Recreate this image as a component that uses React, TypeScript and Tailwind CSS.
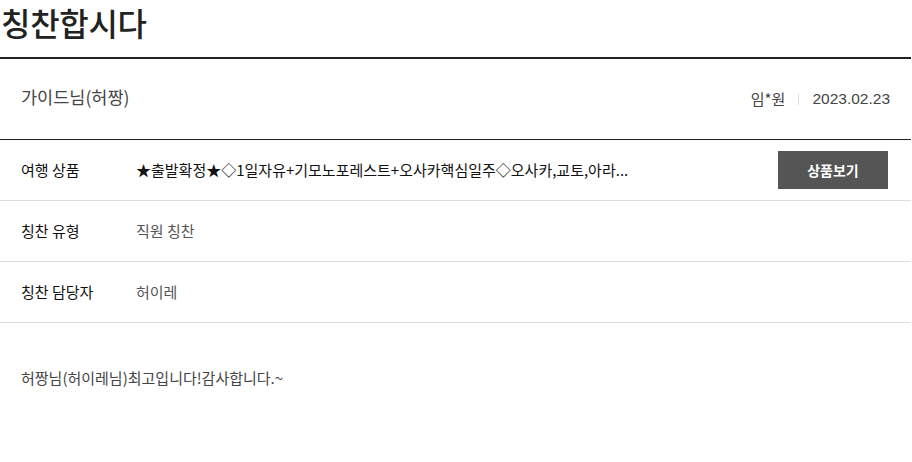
const rows = [
  { label: "여행 상품", value: "★출발확정★◇1일자유+기모노포레스트+오사카핵심일주◇오사카,교토,아라...", button: true, dark: true },
  { label: "칭찬 유형", value: "직원 칭찬" },
  { label: "칭찬 담당자", value: "허이레" },
];

export default function App() {
  return (
    <div className="w-[912px] bg-white text-[#333] font-['Noto_Sans_CJK_KR',sans-serif]">
      <h1 className="h-[44px] pl-[1px] text-[32px] leading-[44px] font-medium text-[#222] tracking-[-0.3px]">
        칭찬합시다
      </h1>
      <div className="mt-[13px] mr-[1px] border-t-2 border-[#222]">
        <div className="flex h-[81px] items-center justify-between border-b border-[#222] pl-[21px] pr-[21px]">
          <span className="text-[17.5px] text-[#444] pb-[3px]">가이드님(허짱)</span>
          <div className="flex items-center text-[15px] text-[#444]">
            <span>임*원</span>
            <span className="mx-[13px] h-[11px] w-px bg-[#ddd]" />
            <span className="font-['Liberation_Sans',sans-serif] text-[15.5px]">2023.02.23</span>
          </div>
        </div>
        {rows.map((r) => (
          <div key={r.label} className="flex h-[61px] items-center border-b border-[#ddd] pl-[21px] pr-[23px]">
            <span className="w-[115px] shrink-0 text-[15px] text-[#111]">{r.label}</span>
            <span className={`whitespace-nowrap text-[15px] ${r.dark ? "text-[#111]" : "text-[#555]"}`}>
              {r.value}
            </span>
            {r.button && (
              <button className="ml-auto h-[38px] w-[110px] bg-[#555] text-[14px] font-bold text-white">
                상품보기
              </button>
            )}
          </div>
        ))}
        <p className="pl-[21px] pt-[44px] text-[15px] text-[#444]">허짱님(허이레님)최고입니다!감사합니다.~</p>
      </div>
    </div>
  );
}
